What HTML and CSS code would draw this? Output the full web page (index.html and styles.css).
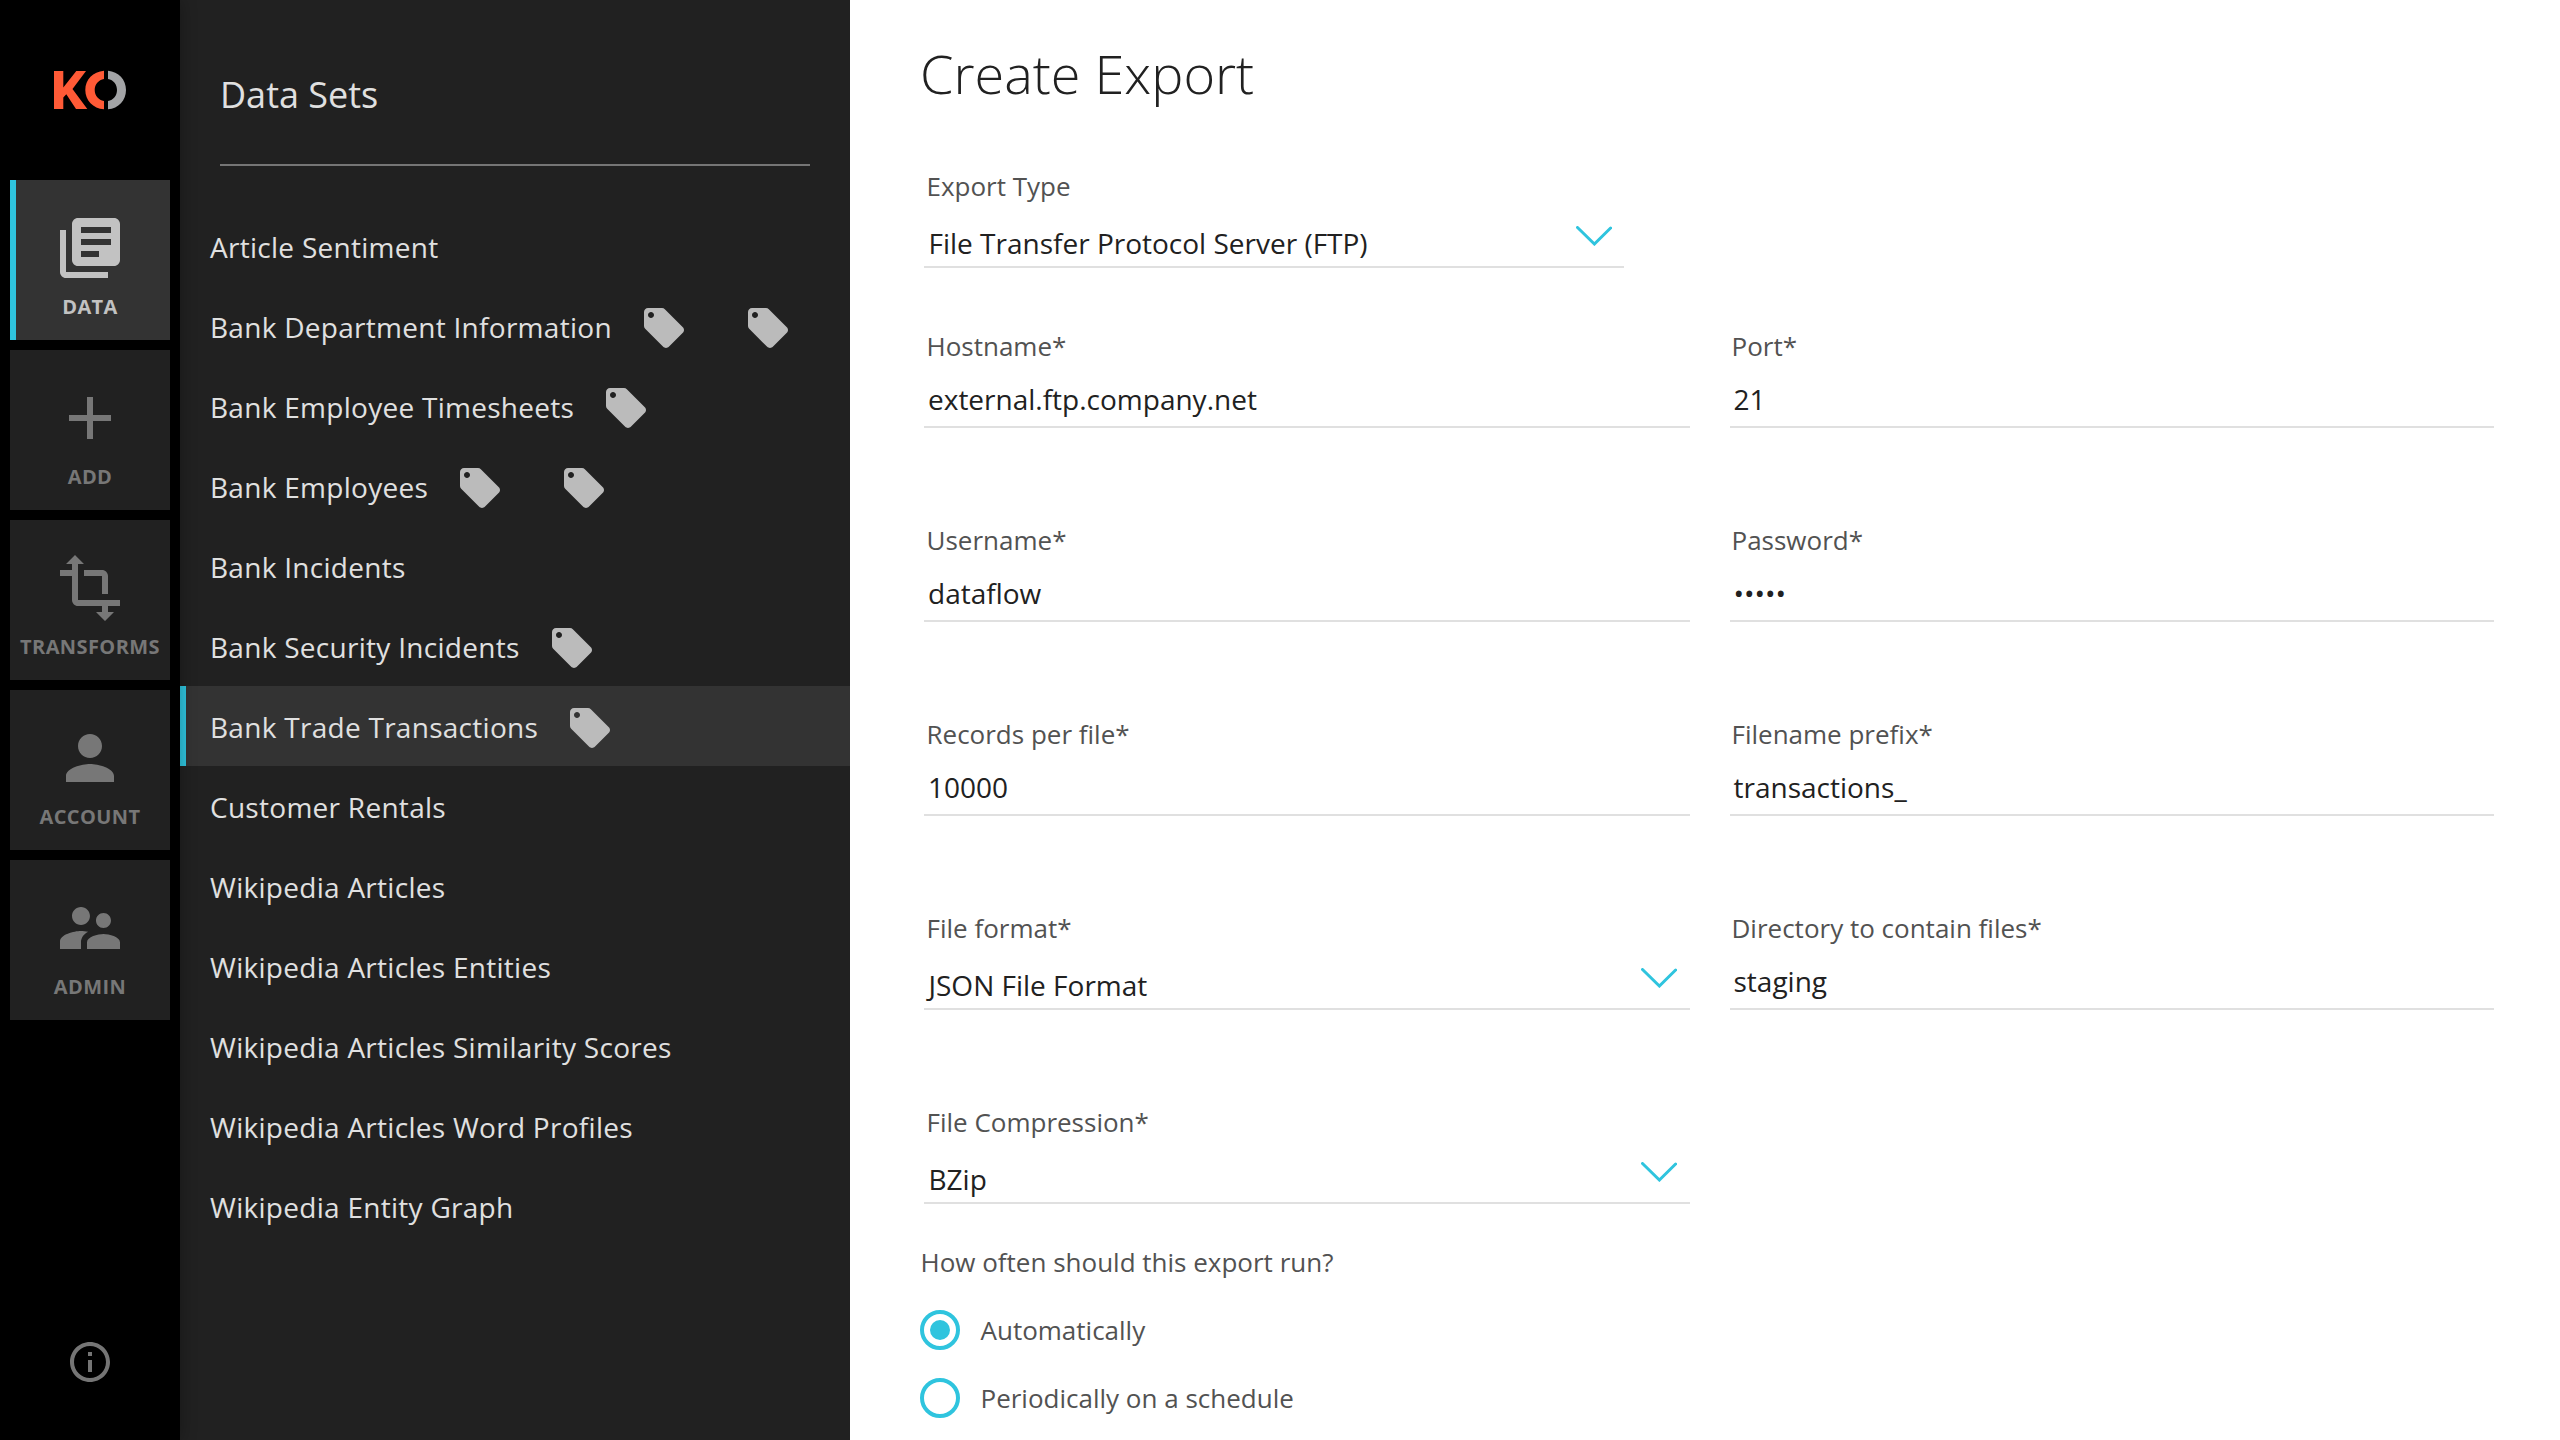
FILE: index.html
```html
<!DOCTYPE html>
<html lang="en">
<head>
<meta charset="utf-8">
<title>Create Export</title>
<link rel="stylesheet" href="styles.css">
</head>
<body>
<svg class="sprite" aria-hidden="true">
  <symbol id="tag" viewBox="0 0 24 24"><path d="M21.41 11.58l-9-9C12.05 2.22 11.55 2 11 2H4c-1.1 0-2 .9-2 2v7c0 .55.22 1.05.59 1.42l9 9c.36.36.86.58 1.41.58.55 0 1.05-.22 1.41-.59l7-7c.37-.36.59-.86.59-1.41 0-.55-.23-1.06-.59-1.42zM5.500 7C4.670 7 4 6.330 4 5.500S4.670 4 5.500 4 7 4.670 7 5.500 6.330 7 5.500 7z"/></symbol>
  <symbol id="chevron" viewBox="0 0 36 20"><path d="M1.500 1.500L18.400 18L34.600 2" fill="none" stroke="#2fc4de" stroke-width="3" stroke-linecap="round"/></symbol>
</svg>
<div class="app">
  <nav class="rail">
    <a class="logo" href="#">
      <svg width="72" height="40" viewBox="0 0 72 40"><path fill="#ff5a36" d="M0 1h9.300v16.500L22.300 1H32L18.500 19L33.300 39H22L12.300 24.300L9.300 27.500V39H0zM50 .7C39 1.500 31.300 9.500 31.300 20S39 38.500 50 39.300V31C44.500 30 40.700 25.500 40.700 20S44.500 10 50 9z"/><path fill="#a3a4a6" d="M54 .7C64.500 1.500 72 9.500 72 20S64.500 38.500 54 39.300V31C59.500 30 63 25.500 63 20S59.500 10 54 9z"/></svg>
    </a>
    <div class="tiles">
      <a class="tile active" href="#"><svg class="tile-icon" viewBox="0 0 24 24"><path d="M4 6H2v14c0 1.100.9 2 2 2h14v-2H4V6zm16-4H8c-1.100 0-2 .9-2 2v12c0 1.100.9 2 2 2h12c1.100 0 2-.9 2-2V4c0-1.100-.9-2-2-2zm-1 9H9V9h10v2zm-4 4H9v-2h6v2zm4-8H9V5h10v2z"/></svg><span>DATA</span></a>
      <a class="tile" href="#"><svg class="tile-icon" viewBox="0 0 24 24"><path d="M19 13h-6v6h-2v-6H5v-2h6V5h2v6h6v2z"/></svg><span>ADD</span></a>
      <a class="tile" href="#"><svg class="tile-icon" viewBox="0 0 24 24"><path d="M22 18v-2H8V4h2L7 1 4 4h2v2H2v2h4v8c0 1.100.9 2 2 2h8v2h-2l3 3 3-3h-2v-2h4zM10 8h6v6h2V8c0-1.100-.9-2-2-2h-6v2z"/></svg><span>TRANSFORMS</span></a>
      <a class="tile" href="#"><svg class="tile-icon" viewBox="0 0 24 24"><path d="M12 12c2.210 0 4-1.790 4-4s-1.790-4-4-4-4 1.790-4 4 1.790 4 4 4zm0 2c-2.670 0-8 1.340-8 4v2h16v-2c0-2.660-5.330-4-8-4z"/></svg><span>ACCOUNT</span></a>
      <a class="tile" href="#"><svg class="tile-icon" viewBox="0 0 24 24"><path d="M16.500 12c1.380 0 2.490-1.120 2.490-2.500S17.880 7 16.500 7C15.120 7 14 8.120 14 9.500s1.120 2.500 2.500 2.500zM9 11c1.660 0 2.990-1.340 2.990-3S10.660 5 9 5C7.340 5 6 6.340 6 8s1.340 3 3 3zm7.500 3c-1.830 0-5.500.92-5.500 2.750V19h11v-2.250c0-1.830-3.670-2.750-5.500-2.750zM9 13c-2.330 0-7 1.170-7 3.500V19h7v-2.250c0-.85.33-2.340 2.370-3.470C10.500 13.100 9.660 13 9 13z"/></svg><span>ADMIN</span></a>
    </div>
    <a class="info" href="#"><svg width="48" height="48" viewBox="0 0 24 24"><path d="M11 17h2v-6h-2v6zm1-15C6.480 2 2 6.480 2 12s4.480 10 10 10 10-4.480 10-10S17.520 2 12 2zm0 18c-4.410 0-8-3.590-8-8s3.590-8 8-8 8 3.590 8 8-3.590 8-8 8zM11 9h2V7h-2v2z"/></svg></a>
  </nav>
  <aside class="panel">
    <h2 class="panel-title">Data Sets</h2>
    <ul class="sets">
      <li>Article Sentiment</li>
      <li>Bank Department Information<svg class="tag"><use href="#tag"/></svg><svg class="tag"><use href="#tag"/></svg></li>
      <li>Bank Employee Timesheets<svg class="tag"><use href="#tag"/></svg></li>
      <li>Bank Employees<svg class="tag"><use href="#tag"/></svg><svg class="tag"><use href="#tag"/></svg></li>
      <li>Bank Incidents</li>
      <li>Bank Security Incidents<svg class="tag"><use href="#tag"/></svg></li>
      <li class="selected">Bank Trade Transactions<svg class="tag"><use href="#tag"/></svg></li>
      <li>Customer Rentals</li>
      <li>Wikipedia Articles</li>
      <li>Wikipedia Articles Entities</li>
      <li>Wikipedia Articles Similarity Scores</li>
      <li>Wikipedia Articles Word Profiles</li>
      <li>Wikipedia Entity Graph</li>
    </ul>
  </aside>
  <main class="main">
    <h1 class="title">Create Export</h1>
    <form class="form">
      <div class="field select type"><label>Export Type</label><div class="value">File Transfer Protocol Server (FTP)<svg class="chevron"><use href="#chevron"/></svg></div></div>
      <div class="grid">
        <div class="field"><label>Hostname*</label><div class="value">external.ftp.company.net</div></div>
        <div class="field"><label>Port*</label><div class="value">21</div></div>
        <div class="field"><label>Username*</label><div class="value">dataflow</div></div>
        <div class="field"><label>Password*</label><div class="value">•••••</div></div>
        <div class="field"><label>Records per file*</label><div class="value">10000</div></div>
        <div class="field"><label>Filename prefix*</label><div class="value">transactions_</div></div>
        <div class="field select"><label>File format*</label><div class="value">JSON File Format<svg class="chevron"><use href="#chevron"/></svg></div></div>
        <div class="field"><label>Directory to contain files*</label><div class="value">staging</div></div>
        <div class="field select"><label>File Compression*</label><div class="value">BZip<svg class="chevron"><use href="#chevron"/></svg></div></div>
      </div>
      <div class="schedule">
        <p class="question">How often should this export run?</p>
        <label class="option"><span class="radio checked"></span>Automatically</label>
        <label class="option"><span class="radio"></span>Periodically on a schedule</label>
      </div>
    </form>
  </main>
</div>
</body>
</html>
```
FILE: styles.css
```css
* { box-sizing: border-box; }
body { margin: 0; font-family: "Open Sans", sans-serif; background: #fff; color: #212121; }
a { color: inherit; text-decoration: none; }
.sprite { display: none; }
.app { display: flex; height: 1440px; overflow: hidden; }

.rail { width: 180px; flex: none; background: #000; display: flex; flex-direction: column; align-items: center; z-index: 1; box-shadow: 0 0 16px rgba(0, 0, 0, .3); }
.logo { height: 180px; padding-top: 70px; }
.logo svg { display: block; }
.tiles { display: flex; flex-direction: column; gap: 10px; }
.tile { width: 160px; height: 160px; padding-top: 32px; background: #212121; color: #777; fill: #777; display: flex; flex-direction: column; align-items: center; font-size: 20px; font-weight: 700; letter-spacing: .4px; line-height: 28px; }
.tile.active { background: linear-gradient(to right, #2fc4de 6px, #333 6px); color: #c2c2c2; fill: #c2c2c2; }
.tile-icon { width: 72px; height: 72px; margin-bottom: 9px; }
.info { margin-top: auto; height: 102px; fill: #757575; }

.panel { width: 670px; flex: none; background: #212121; color: #e0e0e0; }
.panel-title { margin: 0 40px 40px; height: 166px; padding-top: 70px; border-bottom: 2px solid #757575; font-size: 36px; font-weight: 400; line-height: 50px; }
.sets { list-style: none; margin: 0; padding: 0; }
.sets li { height: 80px; padding: 2px 0 0 30px; display: flex; align-items: center; font-size: 28px; letter-spacing: .28px; white-space: nowrap; }
.sets .selected { background: linear-gradient(to right, #2fc4de 6px, #333 6px); }
.tag { width: 48px; height: 48px; fill: #bbb; margin: 2px 0 0 28px; }
.tag + .tag { margin-left: 56px; }

.main { flex: 1; padding: 35px 65px 0 74px; }
.title { margin: 0 0 0 -4px; font-size: 54px; font-weight: 300; line-height: 76px; }
.form { font-size: 28px; }
.grid { display: grid; grid-template-columns: 766px 764px; column-gap: 40px; row-gap: 82px; margin-top: 48px; }
.field { height: 112px; border-bottom: 2px solid #e0e0e0; display: flex; flex-direction: column; }
.field label { padding: 12px 0 0 2.5px; font-size: 26px; line-height: 36px; color: #525252; }
.grid .field:nth-child(even) label { padding-left: 1.5px; }
.value { padding-left: 4px; padding-top: 15px; line-height: 40px; display: flex; justify-content: space-between; }
.grid .field:nth-child(even) .value { padding-left: 3.5px; }
.select .value { padding-top: 19px; padding-left: 4.5px; }
.type { width: 700px; margin-top: 45px; }
.chevron { width: 36px; height: 20px; margin: 3px 12px 0 0; }
.grid .chevron { margin-right: 13px; }
.schedule { margin-left: -4px; color: #525252; font-size: 26px; line-height: 36px; }
.question { margin: 40px 0 30px .5px; }
.option { display: flex; align-items: center; gap: 20.5px; height: 40px; margin-bottom: 28px; }
.radio { width: 40px; height: 40px; border: 4px solid #2fc4de; border-radius: 50%; }
.checked { padding: 6px; background: #2fc4de content-box; }
```
